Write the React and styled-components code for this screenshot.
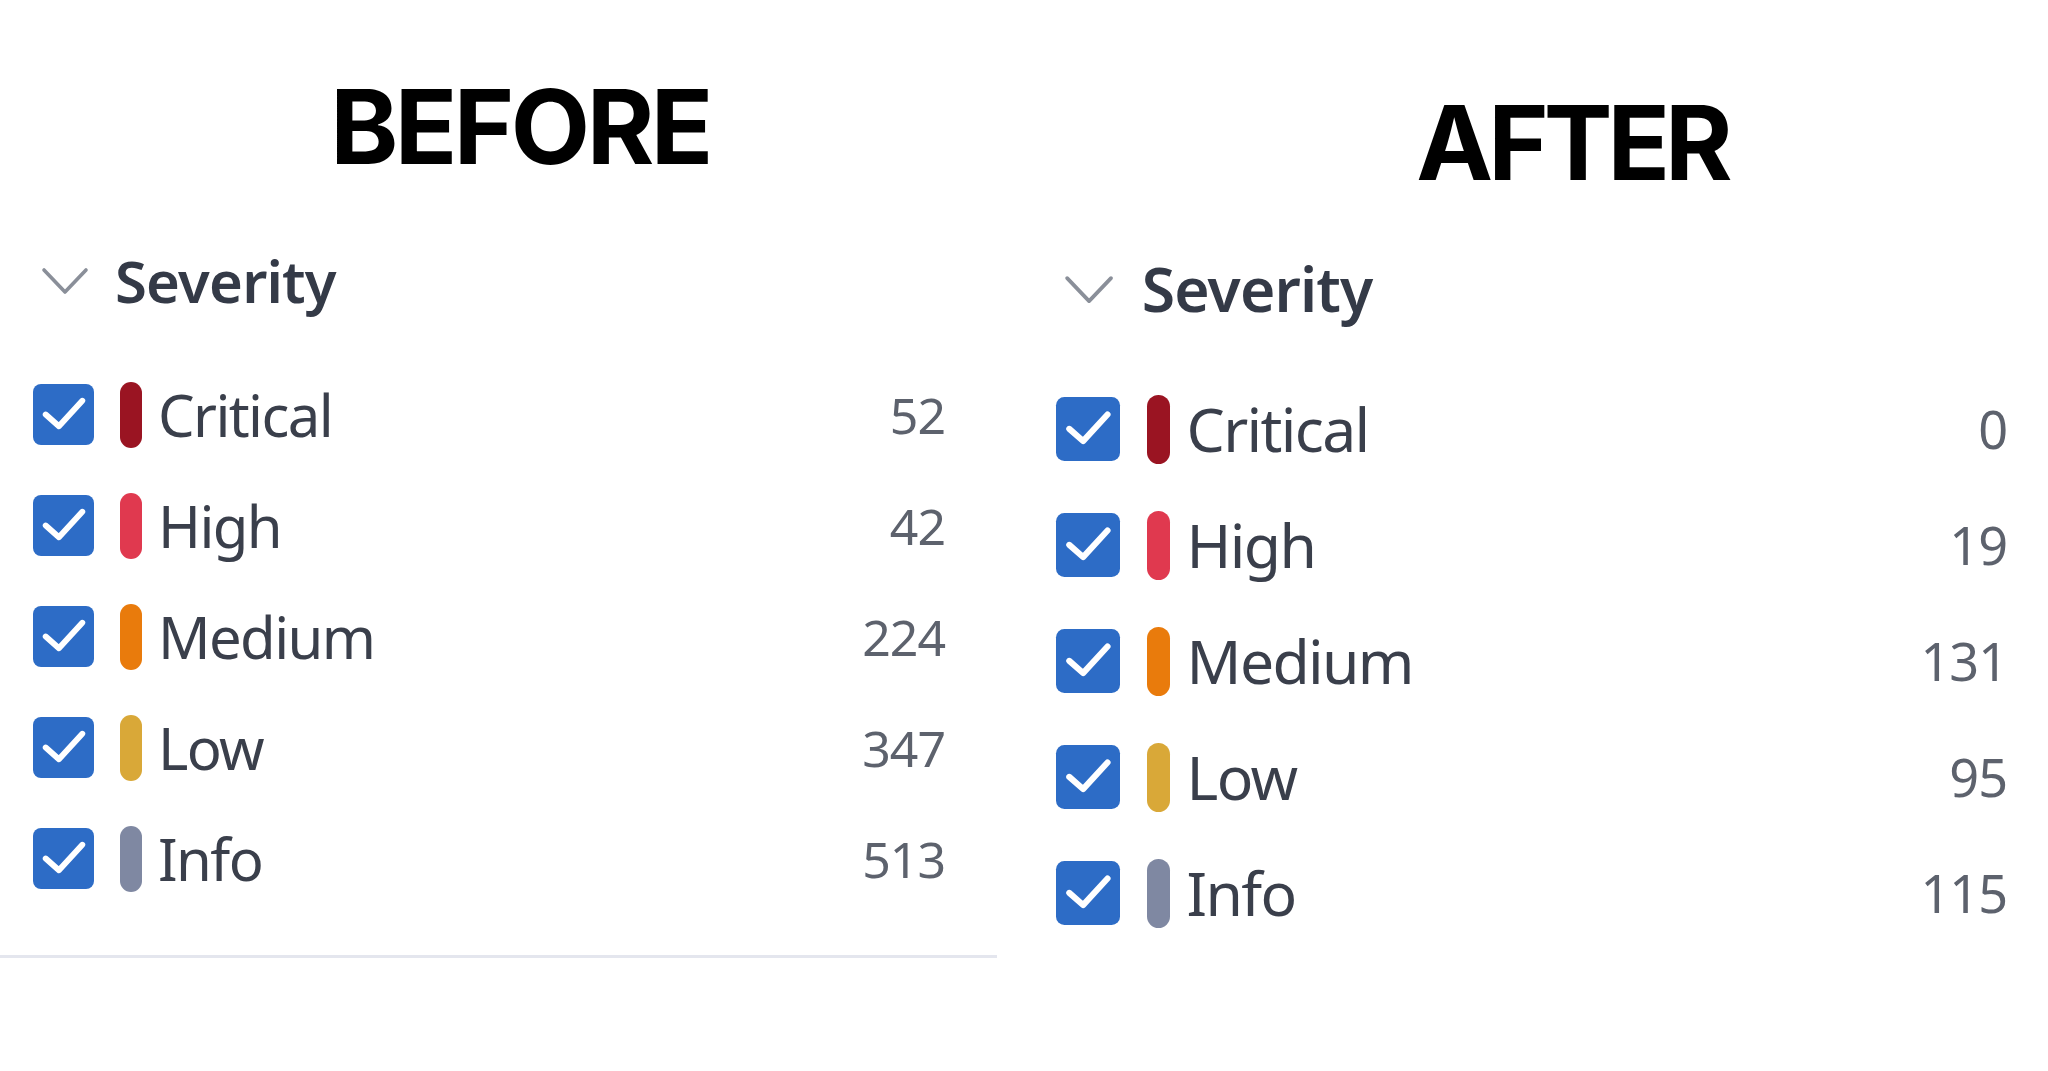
import React from 'react';
import styled, { createGlobalStyle } from 'styled-components';

const GlobalStyle = createGlobalStyle`
  html, body {
    margin: 0;
    padding: 0;
    background: #ffffff;
  }
  body {
    width: 2048px;
    height: 1071px;
    overflow: hidden;
    font-family: "Noto Sans", "Open Sans", sans-serif;
  }
`;

// scale helper: every panel measure is written for the left panel and grown for the right one
const px = (v) => ({ $scale = 1 }) => `${(v * $scale).toFixed(2)}px`;

const Page = styled.div`
  display: flex;
  width: 2048px;
  height: 1071px;
  background: #fff;
`;

const Column = styled.div`
  display: flex;
  flex-direction: column;
  width: ${(p) => p.$width};
  padding-top: ${(p) => p.$top}px;
  box-sizing: border-box;
`;

const Heading = styled.h1`
  margin: 0 0 ${(p) => p.$gap}px 0;
  padding-left: ${(p) => p.$shift || 0}px;
  height: 106px;
  font-family: Inter, "Liberation Sans", sans-serif;
  font-weight: 700;
  font-size: 103px;
  line-height: 106px;
  letter-spacing: ${(p) => p.$track}px;
  color: #000;
  text-align: center;
`;

const Panel = styled.section`
  width: ${(p) => p.$width};
  box-sizing: border-box;
  padding: 0 ${(p) => p.$padR}px ${px(41)} ${(p) => p.$padL}px;
  border-bottom: ${(p) => (p.$divider ? '3px solid #e4e6ee' : '3px solid transparent')};
`;

const Header = styled.div`
  display: flex;
  align-items: center;
  height: ${px(80)};
  padding-left: ${px(8)};
  gap: ${px(26)};
  margin-bottom: ${px(38)};
`;

const Chevron = styled.svg`
  width: ${px(48)};
  height: ${px(28)};
  flex: none;
`;

const Title = styled.span`
  font-family: "Noto Sans", "Open Sans", sans-serif;
  font-weight: 600;
  font-size: ${px(58)};
  letter-spacing: ${px(-0.8)};
  color: #343a47;
  line-height: 1;
`;

const List = styled.div`
  display: flex;
  flex-direction: column;
`;

const Row = styled.div`
  display: grid;
  grid-template-columns: ${px(61)} ${px(22)} 1fr auto;
  align-items: center;
  height: ${px(111)};
`;

const Box = styled.span`
  display: flex;
  align-items: center;
  justify-content: center;
  width: ${px(61)};
  height: ${px(61)};
  border-radius: ${px(8)};
  background: #2d6cc6;
`;

const Bar = styled.span`
  display: block;
  width: ${px(22)};
  height: ${px(66)};
  border-radius: ${px(11)};
  background: ${(p) => p.$color};
  margin-left: ${px(26)};
`;

const Label = styled.span`
  padding-left: ${px(42)};
  font-size: ${px(58)};
  letter-spacing: ${px(-1.6)};
  color: #3a3f4b;
  line-height: 1;
`;

const Count = styled.span`
  font-size: ${px(50)};
  letter-spacing: ${px(-1)};
  color: #5d626d;
  line-height: 1;
  text-align: right;
`;

const levels = [
  { name: 'Critical', color: '#9a1422' },
  { name: 'High', color: '#e0394f' },
  { name: 'Medium', color: '#e97b0c' },
  { name: 'Low', color: '#d9a838' },
  { name: 'Info', color: '#7f88a2' },
];

function Check({ scale }) {
  const s = 61 * scale;
  return (
    <svg width={s} height={s} viewBox="0 0 24 24" fill="none">
      <path d="M5 12 L10.2 16.6 L19.4 6.6" stroke="#fff" strokeWidth="2.3" strokeLinecap="round" strokeLinejoin="round" />
    </svg>
  );
}

function SeverityPanel({ counts, scale, width, padL, padR, divider }) {
  return (
    <Panel $scale={scale} $width={width} $padL={padL} $padR={padR} $divider={divider}>
      <Header $scale={scale}>
        <Chevron $scale={scale} viewBox="0 0 48 28" fill="none">
          <polyline points="3,3 24,25 45,3" stroke="#8a8f99" strokeWidth="3.6" strokeLinecap="round" strokeLinejoin="round" />
        </Chevron>
        <Title $scale={scale}>Severity</Title>
      </Header>
      <List>
        {levels.map((lvl, i) => (
          <Row key={lvl.name} $scale={scale}>
            <Box $scale={scale}>
              <Check scale={scale} />
            </Box>
            <Bar $scale={scale} $color={lvl.color} />
            <Label $scale={scale}>{lvl.name}</Label>
            <Count $scale={scale}>{counts[i]}</Count>
          </Row>
        ))}
      </List>
    </Panel>
  );
}

export default function App() {
  return (
    <Page>
      <GlobalStyle />
      <Column $width="1040px" $top={74}>
        <Heading $gap={61} $track={-3.5}>BEFORE</Heading>
        <SeverityPanel counts={[52, 42, 224, 347, 513]} scale={1} width="997px" padL={33} padR={52} divider />
      </Column>
      <Column $width="1008px" $top={90}>
        <Heading $gap={52} $shift={56} $track={-5}>AFTER</Heading>
        <SeverityPanel counts={[0, 19, 131, 95, 115]} scale={1.045} width="1008px" padL={16} padR={41} />
      </Column>
    </Page>
  );
}
